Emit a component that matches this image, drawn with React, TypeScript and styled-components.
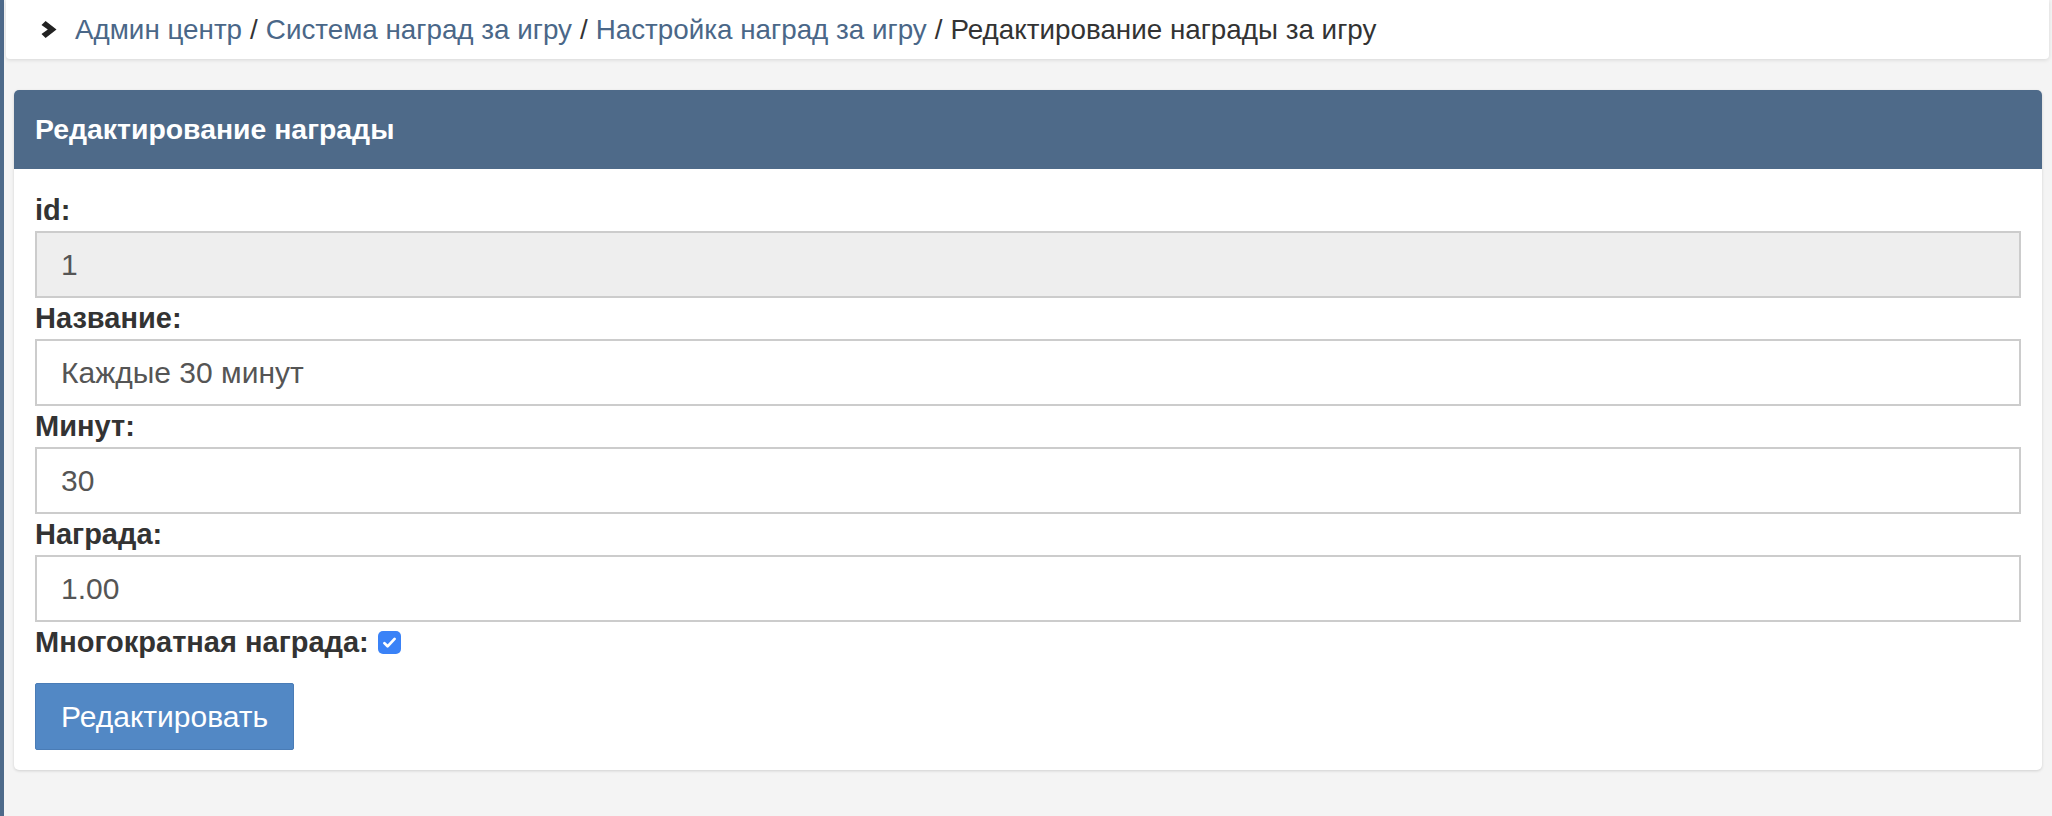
import React from 'react';
import styled, { createGlobalStyle } from 'styled-components';

const palette = {
  stripe: '#4e6a8a',
  header: '#4e6a89',
  link: '#4a6788',
  text: '#333',
  inputText: '#555',
  border: '#ccc',
  pageBg: '#f4f4f4',
  button: '#5288c5',
  buttonBorder: '#4a7cb6',
  check: '#3a82f7',
};

const GlobalStyle = createGlobalStyle`
  body {
    margin: 0;
    background: ${palette.pageBg};
    font-family: "Liberation Sans", Arial, sans-serif;
    color: ${palette.text};
  }
`;

const Layout = styled.div`
  display: flex;
  min-height: 816px;
`;

const SideStripe = styled.div`
  width: 4px;
  flex-shrink: 0;
  background: ${palette.stripe};
`;

const Main = styled.main`
  flex: 1;
  display: flex;
  flex-direction: column;
`;

const TopBar = styled.nav`
  height: 59px;
  margin: 0 3px 0 2px;
  padding-left: 35px;
  display: flex;
  align-items: center;
  background: #fff;
  border-radius: 0 0 4px 4px;
  box-shadow: 0 1px 4px rgba(0, 0, 0, 0.12);
  font-size: 27.8px;
  color: ${palette.text};

  svg {
    margin-right: 18px;
    flex-shrink: 0;
  }
`;

const Crumb = styled.a`
  color: ${palette.link};
  text-decoration: none;
`;

const Separator = styled.span`
  padding: 0 8px;
`;

const Content = styled.div`
  padding: 31px 10px 0;
`;

const Panel = styled.section`
  background: #fff;
  border-radius: 5px;
  box-shadow: 0 1px 3px rgba(0, 0, 0, 0.15);
`;

const PanelHeading = styled.h2`
  margin: 0;
  height: 79px;
  padding: 0 21px;
  display: flex;
  align-items: center;
  background: ${palette.header};
  color: #fff;
  border-radius: 5px 5px 0 0;
  font-size: 28.4px;
  font-weight: bold;
`;

const PanelBody = styled.form`
  padding: 21px 21px 20px;
`;

const FieldLabel = styled.label`
  display: flex;
  align-items: center;
  line-height: 41px;
  font-size: 29px;
  font-weight: bold;
  color: ${palette.text};
`;

const TextInput = styled.input<{ $readOnly?: boolean }>`
  display: block;
  box-sizing: border-box;
  width: 100%;
  height: 67px;
  margin: 0;
  padding: 0 24px;
  border: 2px solid ${palette.border};
  border-radius: 0;
  background: ${(p) => (p.$readOnly ? '#eee' : '#fff')};
  font-family: inherit;
  font-size: 30px;
  color: ${palette.inputText};
  outline: none;
`;

const CheckBox = styled.span`
  width: 23px;
  height: 23px;
  margin-left: 9px;
  border-radius: 5px;
  background: ${palette.check};
  display: inline-flex;
  align-items: center;
  justify-content: center;
`;

const SubmitButton = styled.button`
  margin-top: 20px;
  height: 67px;
  padding: 0 25px;
  border: 1px solid ${palette.buttonBorder};
  border-radius: 2px;
  background: ${palette.button};
  color: #fff;
  font-family: inherit;
  font-size: 30px;
  cursor: pointer;
`;

const crumbs = ['Админ центр', 'Система наград за игру', 'Настройка наград за игру'];

const fields = [
  { label: 'id:', value: '1', readOnly: true },
  { label: 'Название:', value: 'Каждые 30 минут' },
  { label: 'Минут:', value: '30' },
  { label: 'Награда:', value: '1.00' },
];

const Chevron = () => (
  <svg width="16" height="17" viewBox="0 0 16 17">
    <path d="M0.5 4L4.6 0L15.5 8.5L4.6 17L0.5 13L6.8 8.5Z" fill="#222" />
  </svg>
);

const App = () => (
  <>
    <GlobalStyle />
    <Layout>
      <SideStripe />
      <Main>
        <TopBar>
          <Chevron />
          {crumbs.map((c) => (
            <React.Fragment key={c}>
              <Crumb href="#">{c}</Crumb>
              <Separator>/</Separator>
            </React.Fragment>
          ))}
          <span>Редактирование награды за игру</span>
        </TopBar>
        <Content>
          <Panel>
            <PanelHeading>Редактирование награды</PanelHeading>
            <PanelBody onSubmit={(e) => e.preventDefault()}>
              {fields.map((f) => (
                <div key={f.label}>
                  <FieldLabel>{f.label}</FieldLabel>
                  <TextInput defaultValue={f.value} readOnly={f.readOnly} $readOnly={f.readOnly} />
                </div>
              ))}
              <FieldLabel>
                Многократная награда:
                <CheckBox>
                  <svg width="17" height="17" viewBox="0 0 16 16">
                    <path d="M3.2 8.6l3 3L12.8 4.6" fill="none" stroke="#fff" strokeWidth="2.6" strokeLinecap="round" strokeLinejoin="round" />
                  </svg>
                </CheckBox>
              </FieldLabel>
              <SubmitButton type="submit">Редактировать</SubmitButton>
            </PanelBody>
          </Panel>
        </Content>
      </Main>
    </Layout>
  </>
);

export default App;
